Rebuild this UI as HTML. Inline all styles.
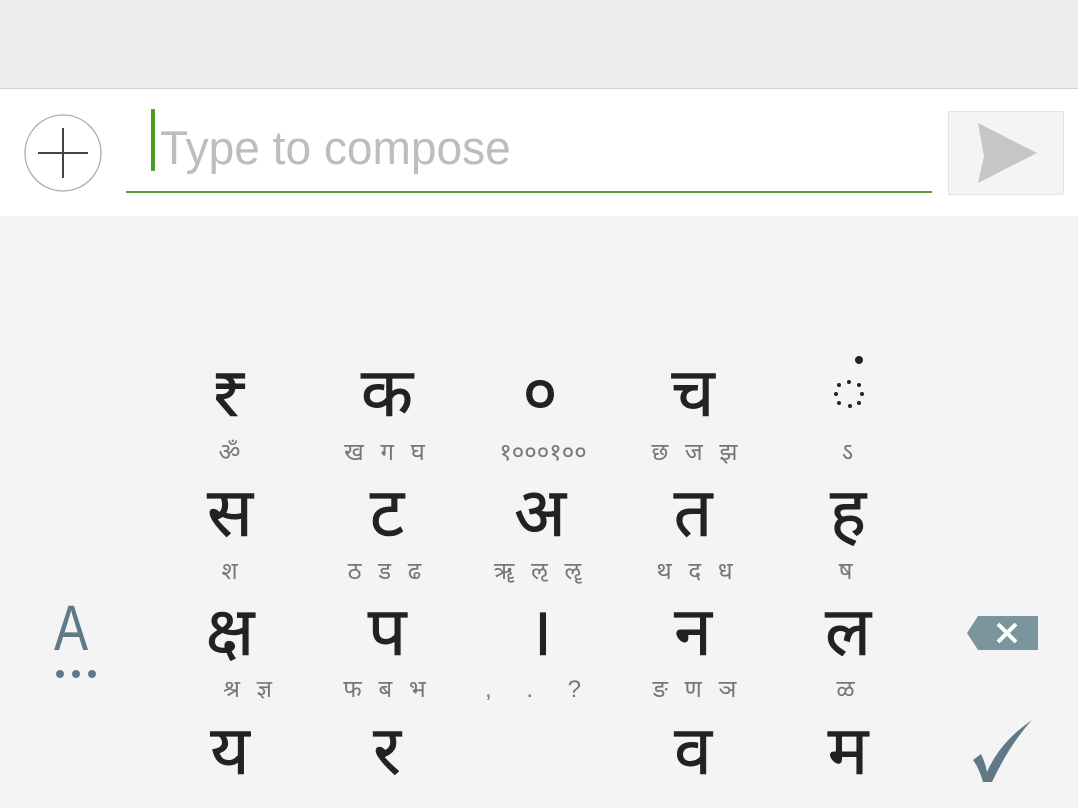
<!DOCTYPE html>
<html><head><meta charset="utf-8"><style>
body{margin:0;width:1078px;height:808px;overflow:hidden;background:#f4f4f4;font-family:"Liberation Sans","Noto Sans Devanagari","Lohit Devanagari",sans-serif;position:relative}
.top{position:absolute;left:0;top:0;width:1078px;height:88px;background:#ebecee;border-bottom:1px solid #cfd0d2}
.bar{position:absolute;left:0;top:89px;width:1078px;height:127px;background:#fff}
.m,.s{position:absolute;transform:translate(-50%,-50%);white-space:nowrap;text-align:center}
.m{font-size:68px;color:#222;line-height:1;-webkit-text-stroke:0.6px #222}
.s{font-size:24px;color:#777;line-height:1;letter-spacing:5px}
</style></head><body>
<div class="top"></div>
<div class="bar">
 <svg style="position:absolute;left:24px;top:25px" width="78" height="78"><circle cx="39" cy="39" r="38" fill="none" stroke="#aaa" stroke-width="1.3"/><line x1="14" y1="39" x2="64" y2="39" stroke="#444" stroke-width="2"/><line x1="39" y1="14" x2="39" y2="64" stroke="#444" stroke-width="2"/></svg>
 <div style="position:absolute;left:151px;top:20px;width:4px;height:62px;background:#4a9e22"></div>
 <div style="position:absolute;left:160px;top:31px;font-size:47px;color:#bdbdbd;transform:scaleX(0.98);transform-origin:left">Type to compose</div>
 <div style="position:absolute;left:126px;top:102px;width:806px;height:2px;background:#5a9a3a"></div>
 <div style="position:absolute;left:948px;top:22px;width:114px;height:82px;background:#f3f4f4;border:1px solid #e2e2e2;border-radius:2px"></div>
 <svg style="position:absolute;left:975px;top:33px" width="65" height="62"><polygon points="3,1 62,31 3,61 9,34" fill="#c5c6c8"/></svg>
</div>
<div class="m" style="left:230px;top:393px">₹</div><div class="m" style="left:387px;top:393px">क</div><div class="m" style="left:540px;top:393px">०</div><div class="m" style="left:693px;top:393px">च</div>
<svg style="position:absolute;left:830px;top:352px" width="40" height="60"><circle cx="29" cy="8" r="4" fill="#222"/><g fill="#222"><circle cx="19" cy="30" r="2"/><circle cx="29" cy="33" r="2"/><circle cx="32" cy="42" r="2"/><circle cx="29" cy="51" r="2"/><circle cx="20" cy="54" r="2"/><circle cx="9" cy="51" r="2"/><circle cx="6" cy="42" r="2"/><circle cx="9" cy="33" r="2"/></g></svg>
<div class="s" style="left:232px;top:453px">ॐ</div><div class="s" style="left:387px;top:453px">ख ग घ</div><div class="s" style="left:543px;top:453px;letter-spacing:0">१०००१००</div><div class="s" style="left:697px;top:453px">छ ज झ</div><div class="s" style="left:850px;top:453px">ऽ</div>
<div class="m" style="left:230px;top:513px">स</div><div class="m" style="left:387px;top:513px">ट</div><div class="m" style="left:540px;top:513px">अ</div><div class="m" style="left:693px;top:513px">त</div><div class="m" style="left:848px;top:513px">ह</div>
<div class="s" style="left:232px;top:572px">श</div><div class="s" style="left:387px;top:572px">ठ ड ढ</div><div class="s" style="left:540px;top:572px">ॠ ऌ ॡ</div><div class="s" style="left:697px;top:572px">थ द ध</div><div class="s" style="left:848px;top:572px">ष</div>
<div style="position:absolute;left:54px;top:596px;font-size:64px;color:#5f7a86;line-height:1;transform:scaleX(0.8);transform-origin:left">A</div>
<svg style="position:absolute;left:54px;top:668px" width="48" height="12"><g fill="#5f7a86"><circle cx="6" cy="6" r="4"/><circle cx="22" cy="6" r="4"/><circle cx="38" cy="6" r="4"/></g></svg>
<div class="m" style="left:230px;top:632px">क्ष</div><div class="m" style="left:387px;top:632px">प</div><div class="m" style="left:540px;top:632px">।</div><div class="m" style="left:693px;top:632px">न</div><div class="m" style="left:848px;top:632px">ल</div>
<svg style="position:absolute;left:966px;top:614px" width="74" height="38"><polygon points="12,2 72,2 72,36 12,36 1,19" fill="#7b959e"/><path d="M32 10 L50 28 M50 10 L32 28" stroke="#fff" stroke-width="4"/></svg>
<div class="s" style="left:250px;top:690px">श्र ज्ञ</div><div class="s" style="left:387px;top:690px">फ ब भ</div><div class="s" style="left:540px;top:690px;letter-spacing:14px">, . ?</div><div class="s" style="left:697px;top:690px">ङ ण ञ</div><div class="s" style="left:848px;top:690px">ळ</div>
<div class="m" style="left:230px;top:751px">य</div><div class="m" style="left:387px;top:751px">र</div><div class="m" style="left:693px;top:751px">व</div><div class="m" style="left:848px;top:751px">म</div>
<svg style="position:absolute;left:968px;top:718px" width="68" height="66"><path d="M5 42 L13 36 Q17 44 19 54 Q32 24 64 2 Q42 26 24 64 L15 64 Q11 50 5 42 Z" fill="#5f7a86"/></svg>
</body></html>
